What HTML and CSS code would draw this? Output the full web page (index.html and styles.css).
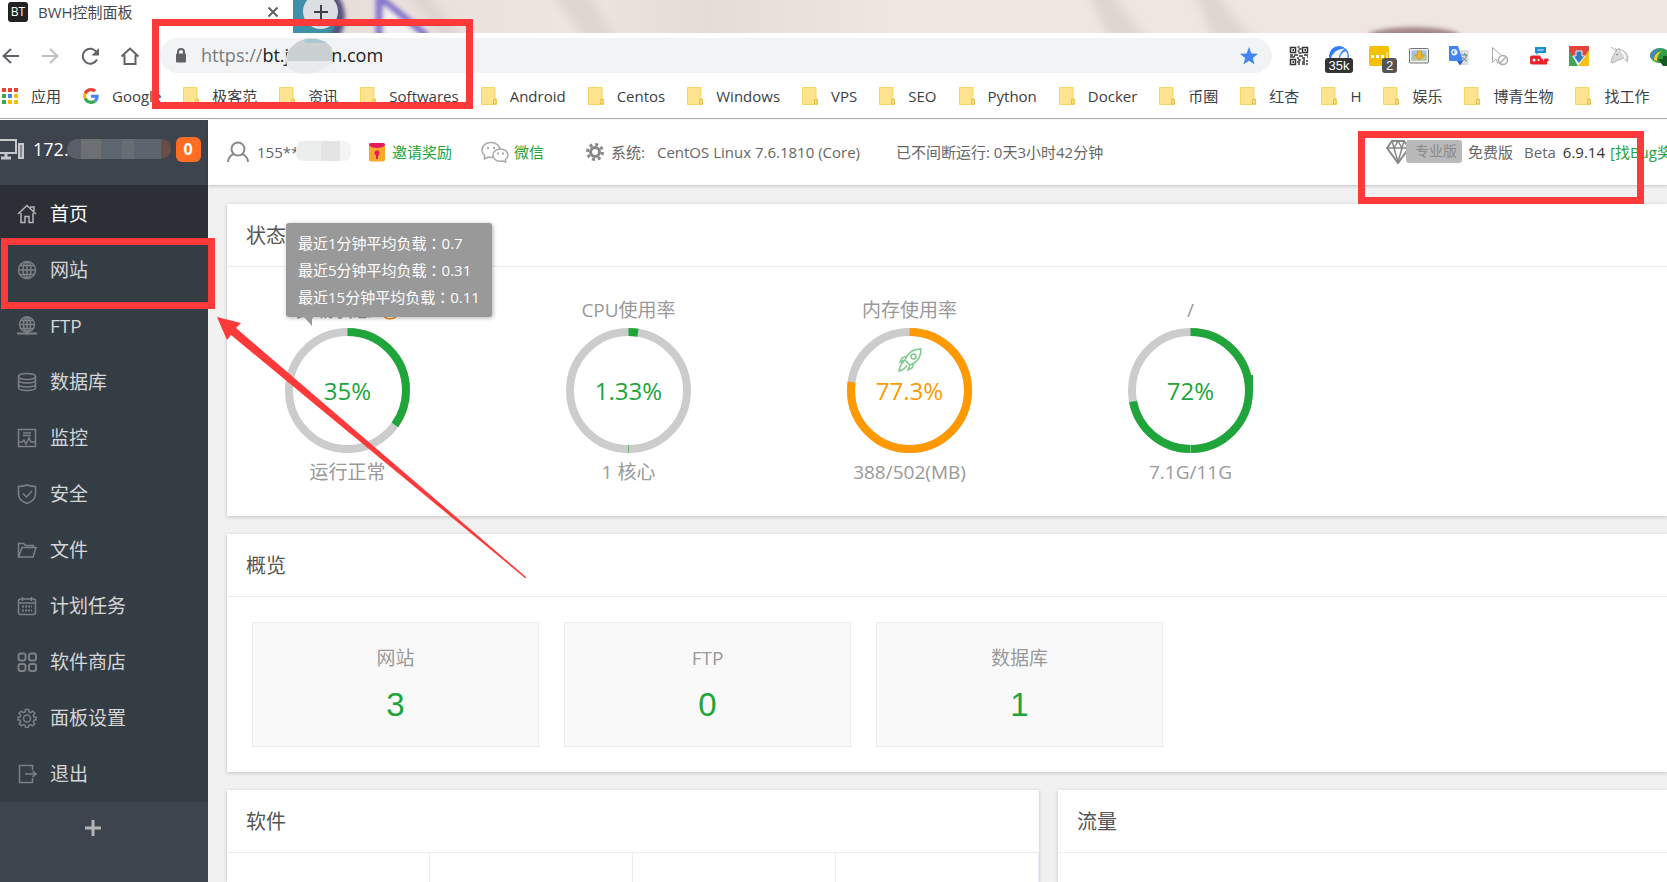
FILE: index.html
```html
<!DOCTYPE html>
<html lang="zh-CN">
<head>
<meta charset="utf-8">
<title>BWH控制面板</title>
<link rel="stylesheet" href="styles.css">
</head>
<body>
<svg class="defs" aria-hidden="true">
  <symbol id="folder" viewBox="0 0 16 18"><path d="M1.500 .5h12.500v11.500h1.500v5.500H.5V.5z" fill="#ffe48f" stroke="#f7d55e"/><path d="M12.500 17v-4.500h2.500V17z" fill="#ffe48f" stroke="#e8bf45"/></symbol>
</svg>

<header class="browser">
  <div class="tabs">
    <svg class="wallpaper" viewBox="0 0 1374 33" preserveAspectRatio="xMinYMin slice" aria-hidden="true">
      <defs>
        <linearGradient id="wp" x1="0" x2="1"><stop offset="0" stop-color="#e6dcd8"/><stop offset=".2" stop-color="#efe5e0"/><stop offset=".3" stop-color="#e5dcd7"/><stop offset=".45" stop-color="#f0e6e2"/><stop offset=".62" stop-color="#efe5e1"/><stop offset="1" stop-color="#efe6e1"/></linearGradient>
        <filter id="soft" x="-20%" y="-50%" width="140%" height="200%"><feGaussianBlur stdDeviation="2"/></filter>
        <filter id="softer" x="-20%" y="-50%" width="140%" height="200%"><feGaussianBlur stdDeviation="5"/></filter>
      </defs>
      <rect width="1374" height="33" fill="url(#wp)"/>
      <g fill="#dfd6d2" filter="url(#softer)"><path d="M110-9h24l46 60h-20zM255-9h40l30 52h-30zM795-9h22l40 52h-40zM900-9h22l40 52h-40z"/></g>
      <g filter="url(#soft)"><circle cx="16" cy="17" r="36" fill="#57517e"/><circle cx="12" cy="18" r="30" fill="#3e91a8"/><path d="M86-3v40M86-3l48 39" stroke="#8776cf" stroke-width="7" fill="#f7f3f3"/><path d="M92 6v32h36z" fill="#f4f1f4"/></g>
      <ellipse cx="1121" cy="36" rx="46" ry="9" fill="#a38688" filter="url(#soft)"/>
    </svg>
    <div class="tab">
      <span class="favicon">BT</span>
      <span class="tab-title">BWH控制面板</span>
      <button class="icon-btn tab-close" aria-label="关闭"><svg viewBox="0 0 12 12" width="12" height="12"><path d="M1.500 1.500l9 9m0-9l-9 9" stroke="#5f6368" stroke-width="2"/></svg></button>
    </div>
    <button class="new-tab" aria-label="新标签页"><svg viewBox="0 0 16 16" width="16" height="16"><path d="M8 1v14M1 8h14" stroke="#3c4043" stroke-width="2"/></svg></button>
  </div>

  <div class="toolbar">
    <nav class="nav-buttons">
      <button class="icon-btn" aria-label="后退"><svg viewBox="0 0 20 20" width="20" height="20"><path d="M19 10H4M11 3l-7.500 7 7.500 7" fill="none" stroke="#5f6368" stroke-width="2"/></svg></button>
      <button class="icon-btn" aria-label="前进"><svg viewBox="0 0 20 20" width="20" height="20"><path d="M2 10h15M10 3l7.500 7-7.500 7" fill="none" stroke="#bdc1c6" stroke-width="2"/></svg></button>
      <button class="icon-btn" aria-label="刷新"><svg viewBox="0 0 20 20" width="20" height="20"><path d="M17 13.500A7.500 7.500 0 1 1 16.500 6" fill="none" stroke="#5f6368" stroke-width="2"/><path d="M19 2v7.500h-7.500z" fill="#5f6368"/></svg></button>
      <button class="icon-btn" aria-label="主页"><svg viewBox="0 0 20 20" width="20" height="20"><path d="M1.500 10.500L10 2.500l8.500 8M4.500 9v9h11V9" fill="none" stroke="#5f6368" stroke-width="2"/></svg></button>
    </nav>
    <div class="address">
      <svg viewBox="0 0 12 16" width="12" height="16"><rect x="1" y="5.500" width="10" height="9" rx="1" fill="#5f6368"/><path d="M3 6V4a3 3 0 0 1 6 0v2" fill="none" stroke="#5f6368" stroke-width="2"/></svg>
      <label for="url" class="scheme">https://</label>
      <div class="url-field">
        <input id="url" type="text" value="bt.j         n.com">
        <svg class="smudge" viewBox="0 0 48 36" aria-hidden="true"><path d="M0 20C2 8 12 4 18 2 30-1 44 3 46 12v12C34 38 12 38 6 32 1 30 0 26 0 20z" fill="#e9eaec"/><path d="M2 14C8 4 16 1 22 1c12 0 24 4 24 12v10H1z" fill="#cbd0d3"/><path d="M17 2c8-3 18-1 24 3H20z" fill="#aec8d3"/></svg>
      </div>
      <button class="icon-btn" aria-label="收藏"><svg viewBox="0 0 20 20" width="20" height="20"><path d="M10 1l2.400 6.400 6.600.3-5.200 4.200 1.800 6.600-5.600-3.700-5.600 3.700 1.800-6.600L1 7.700l6.600-.3z" fill="#4285f4"/></svg></button>
    </div>
    <div class="extensions">
      <button class="icon-btn" aria-label="二维码"><svg viewBox="0 0 20 20" width="20" height="20" fill="none" stroke="#333"><path d="M1.500 1.500h5v5h-5zM13.500 1.500h5v5h-5zM1.500 13.500h5v5h-5z" stroke-width="1.500"/><path d="M3.500 4h1.500M15.500 4h1.500M3.500 16h1.500" stroke-width="2"/><path d="M8.500 1h2m-1 2h3m-4 2h2m-1 2h3M1 9h3m1 0h4m1 1h4m1-1h4M1 11h5m2 1h2m3 0h3m2-1h1M9 14h3m2 0h2m1 1h2M8 16h3m2 0h3M9 18h2m2 0h3m1 0h2" stroke-width="1.300"/></svg></button>
      <button class="icon-btn" aria-label="流量统计"><svg viewBox="0 0 20 20" width="20" height="20"><circle cx="10" cy="10" r="10" fill="#2f7df6"/><path d="M2 12C4 6 10 2 16 3c-4 2-6 6-6 9zM11 13c0-4 2-7 6-8 2 3 2 6 1 9z" fill="#eef5ff"/></svg><span class="badge badge-wide">35k</span></button>
      <button class="icon-btn" aria-label="消息"><svg viewBox="0 0 20 20" width="20" height="20"><rect width="20" height="20" rx="2" fill="#f5c000"/><path d="M2 10.500h3m2 0h3m2 0h3" stroke="#fff" stroke-width="3"/><path d="M18 6v6" stroke="#fff"/></svg><span class="badge badge-corner">2</span></button>
      <button class="icon-btn" aria-label="图片下载"><svg viewBox="0 0 20 20" width="20" height="20"><rect x=".5" y="2.500" width="19" height="14.500" rx="1" fill="#eee" stroke="#777"/><path d="M2.500 4.500h15v10h-15z" fill="#9cc3df"/><path d="M2.500 12l5-3 4 2 6-2v5.500h-15z" fill="#b9c4a1"/><path d="M8.500 5h4v4h3L10.500 14 5.500 9h3z" fill="#f3b51c" stroke="#c58a10" stroke-width=".6"/></svg></button>
      <button class="icon-btn" aria-label="翻译"><svg viewBox="0 0 20 20" width="20" height="20"><path d="M8 4h11.500v15H12z" fill="#dcdcdc"/><path d="M0 0h9l5 15H1a1 1 0 0 1-1-1z" fill="#4384f3"/><path d="M8 15h6l-3 4.500z" fill="#2b5fc4"/><path d="M8.500 6H6v1.500h1.500A2.500 2.500 0 1 1 7.500 5" fill="none" stroke="#fff" stroke-width="1.300"/><path d="M12.500 9h6m-3-1.500V9m2 0c-.5 3-2.500 5-4 6m0-4c1 2 3 3.500 4.500 4" fill="none" stroke="#5f7d8c"/></svg></button>
      <button class="icon-btn" aria-label="光标"><svg viewBox="0 0 20 20" width="20" height="20" fill="none" stroke="#aaa"><path d="M3.500 1.500v15l3.500-3.500 2 5M3.500 1.500l9 8"/><circle cx="14" cy="14" r="4.500" stroke-width="1.500"/><path d="M11 17l6-6" stroke-width="1.500"/></svg></button>
      <button class="icon-btn" aria-label="机器人"><svg viewBox="0 0 20 20" width="20" height="20"><path d="M6 1h11v6H9.500L7.500 9V7H6z" fill="#1a8fd0"/><path d="M8.500 4h6" stroke="#fff"/><path d="M3 9.500h8l1.500 3h1l1 3 1-3h4v3h-1.500v3H3a2 2 0 0 1-2-2v-5a2 2 0 0 1 2-2z" fill="#e8222b"/><circle cx="5" cy="14" r="1.500" fill="#fff"/><circle cx="9.500" cy="14" r="1" fill="#fff"/></svg></button>
      <button class="icon-btn" aria-label="下载"><svg viewBox="0 0 20 20" width="20" height="20"><path d="M0 0h20v10H0z" fill="#e2463d"/><path d="M0 4l9 16H0z" fill="#3aa757"/><path d="M20 4v16H9z" fill="#fbc116"/><path d="M10 17.500L4 10h3V5h6v5h3z" fill="#2f7cc0" stroke="#e8eef5"/></svg></button>
      <button class="icon-btn" aria-label="独角兽"><svg viewBox="0 0 20 20" width="20" height="20"><path d="M2 1l6 5M6 2l3 3" stroke="#aaa"/><path d="M7 5l3-3 1 2c4 0 7 3 8 7l-1 5c-1-2-2-3-4-4-1 1-3 2-5 2l-5 3-2-1 1-4z" fill="#d9d9d9" stroke="#b5b5b5"/><path d="M12 5c3 2 4 5 4 8" fill="none" stroke="#fff" stroke-width="1.500"/><circle cx="8" cy="8.500" r=".8" fill="#777"/></svg></button>
      <button class="icon-btn" aria-label="下载管理器"><svg viewBox="0 0 20 20" width="20" height="20"><ellipse cx="11" cy="9.500" rx="10" ry="7.500" fill="#2f9e44"/><path d="M1 10c1-5 6-8 11-7-5 2-7 6-7 11-2-1-4-2-4-4z" fill="#4b83c8"/><path d="M5 14c0-5 3-8 8-9-4 3-5 6-5 10z" fill="#f2cf2c"/><path d="M9 13h5v-3h6v10h-6z" fill="#165b22"/></svg></button>
    </div>
  </div>

  <nav class="bookmarks">
    <a href="#"><svg viewBox="0 0 16 16" class="bm"><path d="M0 0h4v4H0zM6 0h4v4H6zM12 0h4v4h-4z" fill="#ea4335"/><path d="M0 6h4v4H0z" fill="#34a853"/><path d="M6 6h4v4H6z" fill="#4285f4"/><path d="M12 6h4v4h-4zM6 12h4v4H6zM12 12h4v4h-4z" fill="#fbbc05"/><path d="M0 12h4v4H0z" fill="#34a853"/></svg>应用</a>
    <a href="#"><svg viewBox="0 0 48 48" class="bm"><path fill="#EA4335" d="M24 9.500c3.540 0 6.710 1.220 9.210 3.600l6.850-6.850C35.900 2.380 30.470 0 24 0 14.620 0 6.510 5.380 2.560 13.220l7.980 6.190C12.430 13.720 17.740 9.500 24 9.500z"/><path fill="#4285F4" d="M46.980 24.550c0-1.570-.15-3.090-.38-4.550H24v9.020h12.940c-.58 2.960-2.260 5.480-4.780 7.180l7.730 6c4.510-4.180 7.090-10.360 7.090-17.650z"/><path fill="#FBBC05" d="M10.530 28.590c-.48-1.450-.76-2.990-.76-4.590s.27-3.140.76-4.590l-7.980-6.190C.92 16.460 0 20.120 0 24c0 3.880.92 7.540 2.560 10.780l7.970-6.190z"/><path fill="#34A853" d="M24 48c6.480 0 11.930-2.130 15.890-5.810l-7.730-6c-2.150 1.450-4.920 2.300-8.160 2.300-6.260 0-11.570-4.220-13.470-9.910l-7.980 6.190C6.510 42.620 14.620 48 24 48z"/></svg>Google</a>
    <a href="#"><svg class="bm folder"><use href="#folder"/></svg>极客范</a>
    <a href="#"><svg class="bm folder"><use href="#folder"/></svg>资讯</a>
    <a href="#"><svg class="bm folder"><use href="#folder"/></svg>Softwares</a>
    <a href="#"><svg class="bm folder"><use href="#folder"/></svg>Android</a>
    <a href="#"><svg class="bm folder"><use href="#folder"/></svg>Centos</a>
    <a href="#"><svg class="bm folder"><use href="#folder"/></svg>Windows</a>
    <a href="#"><svg class="bm folder"><use href="#folder"/></svg>VPS</a>
    <a href="#"><svg class="bm folder"><use href="#folder"/></svg>SEO</a>
    <a href="#"><svg class="bm folder"><use href="#folder"/></svg>Python</a>
    <a href="#"><svg class="bm folder"><use href="#folder"/></svg>Docker</a>
    <a href="#"><svg class="bm folder"><use href="#folder"/></svg>币圈</a>
    <a href="#"><svg class="bm folder"><use href="#folder"/></svg>红杏</a>
    <a href="#"><svg class="bm folder"><use href="#folder"/></svg>H</a>
    <a href="#"><svg class="bm folder"><use href="#folder"/></svg>娱乐</a>
    <a href="#"><svg class="bm folder"><use href="#folder"/></svg>博青生物</a>
    <a href="#"><svg class="bm folder"><use href="#folder"/></svg>找工作</a>
  </nav>
</header>

<div class="app">
  <aside class="sidebar">
    <div class="host">
      <svg viewBox="0 0 26 22" width="26" height="22" fill="none" stroke="#c6c9cc" stroke-width="2"><path d="M-4 2h20v13H-4z"/><path d="M6 15v4M1 20h10" stroke-width="3"/><rect x="19" y="6" width="4" height="14" fill="#888"/></svg>
      <span>172.</span><span class="mosaic dark"></span><span class="count">0</span>
    </div>
    <ul class="menu">
      <li class="active"><a href="#"><svg class="mi" viewBox="0 0 20 20"><path d="M1 10l9-8.500L19 10M13 3h4v4M4 9v9.500h4v-6h4v6h4V9"/></svg>首页</a></li>
      <li><a href="#"><svg class="mi" viewBox="0 0 20 20"><circle cx="10" cy="10" r="8.500"/><ellipse cx="10" cy="10" rx="4" ry="8.500"/><path d="M10 1.500v17M1.500 10h17M3 5.500h14M3 14.500h14"/></svg>网站</a></li>
      <li><a href="#"><svg class="mi" viewBox="0 0 20 20"><circle cx="10" cy="8.500" r="7.500"/><ellipse cx="10" cy="8.500" rx="3.500" ry="7.500"/><path d="M10 1v18M2.500 8.500h15M4 4.500h12M4 12.500h12"/><path d="M0 17.500h20" stroke-width="2"/></svg>FTP</a></li>
      <li><a href="#"><svg class="mi" viewBox="0 0 20 20"><ellipse cx="10" cy="4.500" rx="8.500" ry="3"/><path d="M1.500 4.500v11c0 4 17 4 17 0v-11M1.500 8c0 4 17 4 17 0M1.500 12c0 4 17 4 17 0"/></svg>数据库</a></li>
      <li><a href="#"><svg class="mi" viewBox="0 0 20 20"><path d="M1.500 1.500h17v17h-17zM6 5h8M6 7.500h8M2 14h3l2-2 2 4 3-6 2 4h4"/></svg>监控</a></li>
      <li><a href="#"><svg class="mi" viewBox="0 0 20 20"><path d="M10 1c3 1 5 1.500 8.500 1.500V10c0 4-3 7.500-8.500 9.500C4.500 17.500 1.500 14 1.500 10V2.500C5 2.500 7 2 10 1zM6 9.500l3.500 3.500L15 7"/></svg>安全</a></li>
      <li><a href="#"><svg class="mi" viewBox="0 0 20 20"><path d="M1.500 17V3.500h5l2 2h8V8M1.500 17L5 7.500h14L16 17z"/></svg>文件</a></li>
      <li><a href="#"><svg class="mi" viewBox="0 0 20 20"><rect x="1.500" y="3" width="17" height="15.500" rx="2"/><path d="M2 7h16M5.500 1v4M14.500 1v4"/><path d="M5 10.500h10M5 14.500h10" stroke-width="2" stroke-dasharray="2 1"/></svg>计划任务</a></li>
      <li><a href="#"><svg class="mi" viewBox="0 0 20 20"><g stroke-width="2"><rect x="1.500" y="1.500" width="7" height="7" rx="2"/><rect x="12" y="1.500" width="7" height="7" rx="2"/><rect x="1.500" y="12" width="7" height="7" rx="2"/><rect x="12" y="12" width="7" height="7" rx="2"/></g></svg>软件商店</a></li>
      <li><a href="#"><svg class="mi" viewBox="0 0 20 20"><path d="M8.500 1.500h3l.5 2.500 1.500.7 2.300-1.500 2 2L16.300 7.500l.7 1.500 2 .2v2.600l-2 .4-.7 1.500 1.300 2.200-2 2-2.200-1.300-1.500.6-.6 2.300h-2.600L8 17.200l-1.500-.6-2.200 1.300-2-2 1.300-2.200-.6-1.500-2-.4V9.200L3 9l.7-1.500L2.200 5.200l2-2L6.500 4.700 8 4z"/><circle cx="10" cy="10.500" r="3.500"/></svg>面板设置</a></li>
      <li><a href="#"><svg class="mi" viewBox="0 0 20 20"><path d="M15.500 6V1.500h-13v17h13V14M8 10h11M15.500 7l3.500 3-3.500 3"/></svg>退出</a></li>
    </ul>
    <button class="icon-btn add" aria-label="添加"><svg viewBox="0 0 16 16" width="16" height="16"><path d="M8 0v16M0 8h16" stroke="#b4b4b4" stroke-width="3"/></svg></button>
  </aside>

  <div class="main">
    <div class="topbar">
      <div class="item user"><svg viewBox="0 0 22 22" width="22" height="22" fill="none" stroke="#888" stroke-width="2"><circle cx="11" cy="8" r="6.500"/><path d="M1 21c0-4 3-7 6-8M21 21c0-4-3-7-6-8"/></svg><span class="account">155**</span><span class="mosaic light"></span></div>
      <a class="item invite" href="#"><svg viewBox="0 0 16 20" width="16" height="20"><rect y="1" width="16" height="18.500" rx="2" fill="#f9a928"/><path d="M0 3a2 2 0 0 1 2-2h12a2 2 0 0 1 2 2C14 7 2 7 0 3z" fill="#e6195f"/><circle cx="8" cy="11" r="2.500" fill="#e6195f"/><path d="M7 11h2v6H7z" fill="#e6195f"/></svg>邀请奖励</a>
      <a class="item wechat" href="#"><svg viewBox="0 0 28 22" width="28" height="22" fill="#fff" stroke="#aaa" stroke-width="1.500"><path d="M10 1.500c5 0 9 3 9 7.500s-4 7.500-9 7.500c-1 0-2 0-3-.5L3.500 18V14C2 13 1 11 1 9c0-4.500 4-7.500 9-7.500z"/><path d="M19.500 8c4 0 7.500 2.500 7.500 6 0 2-1 3.500-2.500 4.500v2.500l-3-1c-5 1-9.500-1.500-9.500-6 0-3.500 3.500-6 7.500-6z"/><path d="M6 7h2m4 0h2m2 5.500h2m3 0h2" stroke-width="2"/></svg>微信</a>
      <div class="item system"><svg viewBox="0 0 18 18" width="18" height="18" fill="none" stroke="#888"><circle cx="9" cy="9" r="4.500" stroke-width="3"/><circle cx="9" cy="9" r="7.500" stroke-width="3" stroke-dasharray="3 2.890"/></svg><span>系统:</span><span class="os">CentOS Linux 7.6.1810 (Core)</span></div>
      <div class="item">已不间断运行: 0天3小时42分钟</div>
      <div class="version"><svg viewBox="0 0 24 24" width="24" height="24" fill="#fff" stroke="#888" stroke-width="2"><path d="M6 1h12l5 7-11 15L1 8z"/><path d="M1 8h22M6 1l2 7 4 14 4-14 2-7M8 8l4-7 4 7" fill="none" stroke-width="1.500"/></svg><span class="pro">专业版</span><span>免费版</span><span class="beta">Beta</span><span class="num">6.9.14</span><a href="#">[找Bug奖</a></div>
    </div>

    <main class="content">
      <section class="card">
        <h2>状态</h2>
        <div class="gauges">
          <div class="gauge">
            <h3>负载状态 <svg class="help" viewBox="0 0 20 20"><circle cx="10" cy="10" r="9" fill="none" stroke="#f98c21" stroke-width="1.500"/></svg></h3>
            <div class="ring"><svg viewBox="0 0 125 125"><circle cx="62.500" cy="62.500" r="58.500"/><circle class="arc" cx="62.500" cy="62.500" r="58.500" pathLength="100" stroke-dasharray="35 100"/></svg><span>35%</span></div>
            <p>运行正常</p>
            <div class="tooltip" role="tooltip"><div>最近1分钟平均负载<span class="colon" lang="zh-TW">：</span>0.7</div><div>最近5分钟平均负载<span class="colon" lang="zh-TW">：</span>0.31</div><div>最近15分钟平均负载<span class="colon" lang="zh-TW">：</span>0.11</div></div>
          </div>
          <div class="gauge">
            <h3>CPU使用率</h3>
            <div class="ring"><svg viewBox="0 0 125 125"><circle cx="62.500" cy="62.500" r="58.500"/><circle class="arc" cx="62.500" cy="62.500" r="58.500" pathLength="100" stroke-dasharray="2.600 100"/><path class="seam" d="M62.500 117v8"/></svg><span>1.33%</span></div>
            <p>1 核心</p>
          </div>
          <div class="gauge warn">
            <h3>内存使用率</h3>
            <div class="ring"><svg viewBox="0 0 125 125"><circle cx="62.500" cy="62.500" r="58.500"/><circle class="arc" cx="62.500" cy="62.500" r="58.500" pathLength="100" stroke-dasharray="77.300 100"/></svg>
              <svg class="rocket" viewBox="0 0 24 24"><path d="M23 1c-6 0-11 2-14 7l-2 4 5 5 4-2c5-3 7-8 7-14zM9 8L4 10l-2 4 5-2M16 15l-2 5-4 2 2-5M6 14c-3 1-4 4-5 9 4-1 7-3 8-6"/><circle cx="15.500" cy="8.500" r="2.500"/></svg><span>77.3%</span></div>
            <p>388/502(MB)</p>
          </div>
          <div class="gauge">
            <h3>/</h3>
            <div class="ring"><svg viewBox="0 0 125 125"><circle cx="62.500" cy="62.500" r="58.500"/><circle class="arc" cx="62.500" cy="62.500" r="58.500" pathLength="100" stroke-dasharray="72 100"/><path d="M119 47h6v16h-6z" fill="#20a53a"/><path d="M62.500 117v8" stroke="#7cc58a"/></svg><span>72%</span></div>
            <p>7.1G/11G</p>
          </div>
        </div>
      </section>

      <section class="card">
        <h2>概览</h2>
        <div class="tiles">
          <a class="tile" href="#"><span>网站</span><strong>3</strong></a>
          <a class="tile" href="#"><span>FTP</span><strong>0</strong></a>
          <a class="tile" href="#"><span>数据库</span><strong>1</strong></a>
        </div>
      </section>

      <div class="split">
        <section class="card"><h2>软件</h2><div class="soft-grid"><div></div><div></div><div></div><div></div></div></section>
        <section class="card"><h2>流量</h2></section>
      </div>
    </main>
  </div>
</div>

<div class="mark mark-url"></div>
<div class="mark mark-site"></div>
<div class="mark mark-version"></div>
<svg class="pointer" viewBox="0 0 310 262" aria-hidden="true"><path d="M0 0l24 6-5 5 290 249v1h-1L14 18l-4 5z" fill="#fd3a39"/></svg>
</body>
</html>
```
FILE: styles.css
```css
* { box-sizing: border-box; }
html, body { height: 100%; }
body {
  margin: 0;
  overflow: hidden;
  position: relative;
  display: flex;
  flex-direction: column;
  background: #fff;
  color: #666;
  font: 15px/20px "Open Sans", "Noto Sans CJK SC", sans-serif;
  font-weight: 400;
}
a { color: inherit; text-decoration: none; }
svg { display: block; flex: none; }
h2, h3, p, ul { margin: 0; padding: 0; font-weight: 400; }
.defs { position: absolute; width: 0; height: 0; }
.icon-btn {
  position: relative;
  display: flex;
  align-items: center;
  justify-content: center;
  padding: 0;
  border: 0;
  background: none;
}

/* browser chrome */
.browser { flex: none; height: 120px; border-bottom: 1px solid #fff; box-shadow: inset 0 -1px #a8aaa9; }
.tabs { position: relative; display: flex; height: 33px; overflow: hidden; }
.wallpaper { position: absolute; left: 293px; top: 0; width: calc(100% - 293px); height: 33px; }
.tab { display: flex; align-items: center; width: 293px; height: 24px; padding: 0 14px 0 8px; color: #45494d; }
.tab-title { padding-bottom: 1px; }
.favicon {
  width: 20px; height: 20px; margin-right: 10px; border-radius: 3px;
  background: #222; color: #fff; font-size: 12px; text-align: center;
}
.tab-close { margin-left: auto; }
.new-tab {
  position: relative; display: flex; align-items: center; justify-content: center;
  width: 35px; height: 35px; margin: -6px 0 0 10px; padding: 0;
  border: 0; border-radius: 50%; background: #dbdee3;
}
.toolbar { display: flex; align-items: center; height: 45px; }
.nav-buttons { display: flex; gap: 20px; margin-right: 20px; }
.address {
  display: flex; align-items: center; flex: 1; min-width: 0; height: 35px;
  padding: 0 13px 0 15px; border-radius: 18px; background: #f1f3f4; font-size: 18px;
}
.scheme { margin-left: 14px; padding-bottom: 2px; color: #777b80; }
.url-field { position: relative; flex: 1; }
.url-field input {
  display: block; width: 100%; height: 35px; padding: 0 0 2px; border: 0; outline: 0;
  background: none; color: #202124; font: inherit;
}
.smudge { position: absolute; left: 24px; top: 0; width: 48px; height: 36px; }
.extensions { display: flex; gap: 20px; width: 378px; margin-left: 17px; }
.badge {
  position: absolute; height: 15px; border-radius: 3px; background: #333;
  color: #fff; font-size: 13px; line-height: 15px; text-align: center;
}
.badge-wide { top: 12px; left: -4px; width: 28px; }
.badge-corner { top: 12px; left: 13px; width: 15px; background: #555; }
.bookmarks { display: flex; gap: 22px; height: 36px; padding-left: 2px; color: #3c4043; white-space: nowrap; }
.bookmarks a { display: flex; align-items: center; gap: 13px; }
.bm { width: 16px; height: 16px; }
.bm.folder { height: 18px; }

/* panel frame */
.app { display: flex; flex: 1; min-height: 0; }
.sidebar { flex: none; width: 208px; background: #3d444d; }
.host { display: flex; align-items: center; height: 65px; padding-bottom: 7px; color: #fff; font-size: 18px; }
.host > span:nth-of-type(1) { margin-left: 7px; }
.mosaic { flex: none; height: 20px; border-radius: 10px; }
.mosaic.dark { width: 104px; margin-left: -2px; background: linear-gradient(90deg, #5b6068 0 13%, #6c7072 13% 33%, #5d656e 33% 53%, #666d73 53% 64%, #5d646d 64% 90%, #6b4d46 90%); }
.mosaic.light { width: 55px; border-radius: 7px; background: linear-gradient(90deg, #eceeed 0 45%, #e4e4e4 45% 80%, #f3f4f3 80%); }
.count {
  width: 25px; height: 25px; margin-left: 5px; border-radius: 6px; background: #ff6d24;
  font-size: 16px; font-weight: 700; line-height: 25px; text-align: center;
}
.menu { list-style: none; background: #353d44; }
.menu li { height: 56px; }
.menu .active { height: 57px; background: #2c2f35; }
.menu a { display: flex; align-items: center; gap: 13px; height: 100%; padding-left: 17px; color: #d5d6d7; font-size: 19px; }
.menu .active a { color: #fff; }
.mi { width: 20px; height: 20px; fill: none; stroke: #7d8184; stroke-width: 1.500; }
.active .mi { stroke: #b5b7b9; }
.add { width: 185px; height: 51px; }

.main { display: flex; flex-direction: column; flex: 1; min-width: 0; background: #f1f1f1; }
.topbar {
  display: flex; align-items: center; flex: none; height: 65px; padding: 0 0 2px 19px;
  background: #fff; box-shadow: 0 1px 3px rgba(0, 0, 0, .2); white-space: nowrap;
}
.item { display: flex; align-items: center; }
.user { width: 142px; gap: 8px; }
.user .mosaic { margin-left: -11px; margin-top: -2px; }
.invite, .wechat, .version a { color: #20a53a; }
.invite { width: 112px; gap: 7px; }
.wechat { width: 105px; gap: 5px; }
.system { width: 310px; gap: 7px; }
.os { margin-left: 5px; }
.version { display: flex; align-items: center; width: 281px; margin-left: auto; }
.version > * { flex: none; }
.pro {
  height: 23px; width: 56px; margin: 0 6px 0 -4px; padding-left: 9px; border-radius: 3px;
  background: #b9b9b9; color: #8a8a8a; font-size: 14px; line-height: 22px;
}
.beta { margin-left: 11px; }
.num { margin: 0 5px 0 7px; color: #333; }

/* cards */
.content { display: flex; flex-direction: column; gap: 18px; flex: 1; min-height: 0; padding: 19px 0 0 19px; }
.card { flex: none; background: #fff; box-shadow: 0 1px 4px rgba(0, 0, 0, .2); }
.card h2 { height: 63px; padding-left: 19px; border-bottom: 1px solid #ececec; color: #555; font-size: 20px; line-height: 64px; }
.gauges { display: grid; grid-template-columns: repeat(4, 281px); height: 249px; margin-left: -20px; padding-top: 29px; }
.gauge { position: relative; display: flex; flex-direction: column; align-items: center; color: #999; font-size: 19px; }
.gauge h3 { display: flex; align-items: center; gap: 8px; height: 32px; padding-bottom: 4px; font-size: 19px; line-height: 28px; }
.help { width: 20px; height: 20px; }
.gauge p { margin-top: 5px; line-height: 28px; }
.ring { position: relative; display: grid; place-items: center; width: 125px; height: 125px; color: #20a53a; font-size: 24px; }
.ring > * { grid-area: 1 / 1; }
.ring > svg:first-child { width: 125px; height: 125px; }
.ring circle { fill: none; stroke: #ccc; stroke-width: 8; }
.ring .arc { stroke: #20a53a; transform: rotate(-90deg); transform-origin: center; }
.seam { stroke: #5fb870; }
.warn .ring { color: #f90; }
.warn .arc { stroke: #f90; }
.ring .rocket { align-self: start; width: 24px; height: 24px; margin-top: 20px; fill: none; stroke: #7dcb8c; stroke-width: 1.500; }
.ring .rocket circle { stroke: #7dcb8c; stroke-width: 1.500; }
.tooltip {
  position: absolute; left: 79px; top: -73px; padding: 7px 12px 6px; border-radius: 3px;
  background: #999; color: #fff; font-size: 15px; line-height: 27px; white-space: nowrap;
  box-shadow: 1px 1px 4px rgba(0, 0, 0, .3);
}
.colon { font-family: "Noto Sans CJK TC", sans-serif; line-height: 1; }
.tooltip::after {
  content: ""; position: absolute; left: 18px; top: 100%;
  border-top: 9px solid #999; border-left: 8px solid transparent;
}
.tiles { display: grid; grid-template-columns: repeat(3, 287px); gap: 25px; padding: 25px; }
.tile {
  display: flex; flex-direction: column; align-items: center; gap: 13px; height: 125px; padding-top: 21px;
  border: 1px solid #ececec; background: #f9f9f9; color: #999; font-size: 19px; line-height: 28px;
}
.tile strong { color: #20a53a; font: 33px/40px "Liberation Sans", sans-serif; }
.split { display: grid; grid-template-columns: 4fr 3fr; gap: 19px; flex: 1; }
.split .card { display: flex; flex-direction: column; }
.split h2 { flex: none; }
.soft-grid { display: grid; grid-template-columns: repeat(4, 1fr); flex: 1; }
.soft-grid div { border-right: 1px solid #eaeafa; }

/* annotations */
.mark { position: absolute; border: 7px solid #fd3a39; }
.mark-url { left: 152px; top: 19px; width: 321px; height: 90px; }
.mark-site { left: 1px; top: 238px; width: 214px; height: 71px; }
.mark-version { left: 1358px; top: 131px; width: 286px; height: 73px; }
.pointer { position: absolute; left: 217px; top: 317px; width: 310px; height: 262px; }
```
